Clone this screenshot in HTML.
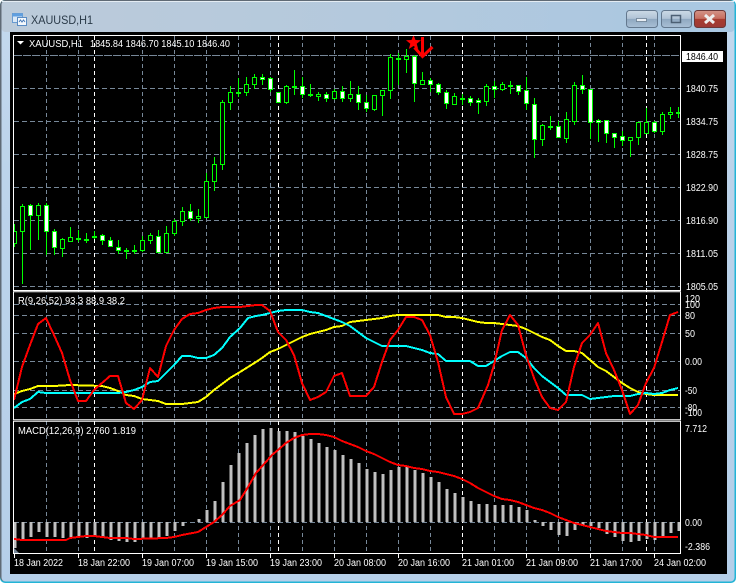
<!DOCTYPE html>
<html><head><meta charset="utf-8"><title>XAUUSD,H1</title>
<style>
html,body{margin:0;padding:0;background:#fff;width:738px;height:583px;overflow:hidden}
svg{display:block}
text{font-family:"Liberation Sans",sans-serif;font-size:10px;fill:#fff}
</style></head><body>
<svg width="738" height="583" viewBox="0 0 738 583" xmlns="http://www.w3.org/2000/svg">
<defs>
<linearGradient id="cap" x1="0" y1="0" x2="1" y2="0"><stop offset="0" stop-color="#bccbda"/><stop offset=".5" stop-color="#b4c9dd"/><stop offset="1" stop-color="#a9c8e2"/></linearGradient>
<linearGradient id="btn" x1="0" y1="0" x2="0" y2="1"><stop offset="0" stop-color="#ccdae6"/><stop offset=".48" stop-color="#b0c3d6"/><stop offset=".5" stop-color="#8fa8c0"/><stop offset="1" stop-color="#a9c0d6"/></linearGradient>
<linearGradient id="cls" x1="0" y1="0" x2="0" y2="1"><stop offset="0" stop-color="#d49488"/><stop offset=".48" stop-color="#c66e60"/><stop offset=".5" stop-color="#a83c30"/><stop offset="1" stop-color="#9c3a36"/></linearGradient>
<linearGradient id="side" x1="0" y1="0" x2="0" y2="1"><stop offset="0" stop-color="#c4d9ee"/><stop offset=".3" stop-color="#bcd3ea"/><stop offset="1" stop-color="#b5cfe9"/></linearGradient>
<clipPath id="m"><rect x="14" y="36" width="666" height="254"/></clipPath>
<clipPath id="r"><rect x="14" y="292" width="666" height="128"/></clipPath>
<clipPath id="d"><rect x="14" y="422" width="666" height="131"/></clipPath>
</defs>

<!-- window -->
<rect x="0" y="0" width="736" height="583" rx="5" fill="#23b4d6"/>
<rect x="0" y="0" width="734.500" height="581.500" rx="5" fill="#5f6a75"/>
<rect x="1.500" y="1" width="733" height="580.500" rx="4" fill="url(#side)"/>
<rect x="1.500" y="1" width="733" height="31" rx="4" fill="url(#cap)"/>
<rect x="2" y="1" width="732" height="1" fill="#e4ecf3"/>

<!-- title icon -->
<rect x="12.500" y="13.500" width="10" height="9" fill="#dbe9f7" stroke="#6a9bd0"/>
<rect x="12.500" y="13.500" width="10" height="3" fill="#5f9fe0"/>
<rect x="17.500" y="17.500" width="9" height="8" fill="#f4f8fc" stroke="#5a8cc4"/>
<path d="M19 22l1.500-2 1.500 2 1.500-2 1.500 2" fill="none" stroke="#4a7cb8"/>
<text x="31" y="24" textLength="62" lengthAdjust="spacingAndGlyphs" style="font-size:12px;fill:#2a3a48">XAUUSD,H1</text>

<!-- window buttons -->
<rect x="626.500" y="10.500" width="31" height="17" rx="3" fill="url(#btn)" stroke="#63788e"/>
<rect x="636.500" y="18.500" width="10" height="3" fill="#e8eef4" stroke="#5e7286" stroke-width=".7"/>
<rect x="661.500" y="10.500" width="30" height="17" rx="3" fill="url(#btn)" stroke="#63788e"/>
<rect x="671.500" y="15.500" width="9" height="7" fill="none" stroke="#4c6074" stroke-width="1.500"/>
<rect x="694.500" y="10.500" width="31" height="17" rx="3" fill="url(#cls)" stroke="#6b3838"/>
<path d="M705 15l9 8M714 15l-9 8" stroke="#eee" stroke-width="3" fill="none"/>

<!-- chart area -->
<rect x="10" y="32" width="717" height="542" fill="#000"/>

<!-- grid -->
<g fill="none" stroke="#778899" stroke-width="1" stroke-dasharray="5 3" shape-rendering="crispEdges">
<path d="M14 88.500H680M14 121.500H680M14 154.500H680M14 187.500H680M14 220.500H680M14 253.500H680M14 286.500H680"/>
<path d="M14 304.500H680M14 315.500H680M14 333.500H680M14 361.500H680M14 390.500H680M14 407.500H680M14 522.500H680"/>
<path d="M14 55.500H680" stroke-dasharray="8 1"/>
<path stroke-dasharray="4 3" d="M46.500 36V553M78.500 36V553M142.500 36V553M174.500 36V553M206.500 36V553M238.500 36V553M270.500 36V553M302.500 36V553M334.500 36V553M366.500 36V553M398.500 36V553M430.500 36V553M494.500 36V553M526.500 36V553M558.500 36V553M590.500 36V553M622.500 36V553M654.500 36V553"/>
<path stroke="#fff" stroke-dasharray="4 3" d="M94.500 36V553M278.500 36V553M462.500 36V553M646.500 36V553"/>
</g>

<!-- wicks -->
<g clip-path="url(#m)" shape-rendering="crispEdges">
<path fill="none" stroke="#0f0" stroke-width="1" d="M14.500 224V247M22.500 204V284M30.500 204V250M38.500 203V240M46.500 203V255M54.500 229V255M62.500 238V257M70.500 227V241M78.500 230V242M86.500 233V243M94.500 231V239M102.500 234V245M110.500 237V247M118.500 240V254M126.500 248V259M134.500 245V254M142.500 236V252M150.500 233V244M158.500 230V253M166.500 226V253M174.500 219V236M182.500 207V226M190.500 204V221M198.500 209V223M206.500 173V217M214.500 157V191M222.500 100V170M230.500 86V110M238.500 78V97M246.500 77V96M254.500 74V89M262.500 74V85M270.500 77V92M278.500 92V102M286.500 85V104M294.500 70V95M302.500 77V98M310.500 84V97M318.500 92V101M326.500 92V102M334.500 89V100M342.500 86V102M350.500 81V102M358.500 86V110M366.500 95V112M374.500 95V111M382.500 90V116M390.500 54V99M398.500 53V85M406.500 49V73M414.500 55V102M422.500 72V84M430.500 78V92M438.500 83V95M446.500 90V109M454.500 93V105M462.500 94V105M470.500 96V106M478.500 98V114M486.500 84V106M494.500 81V98M502.500 82V91M510.500 81V94M518.500 85V95M526.500 77V110M534.500 98V158M542.500 124V146M550.500 116V130M558.500 121V138M566.500 112V143M574.500 82V125M582.500 75V94M590.500 89V139M598.500 119V142M606.500 120V143M614.500 133V148M622.500 131V146M630.500 137V157M638.500 122V145M646.500 108V134M654.500 121V133M662.500 112V135M670.500 107V119M678.500 107V118"/>
<!-- hollow bodies -->
<path fill="#000" stroke="#0f0" stroke-width="1" d="M12.500 231.500h4v12h-4zM20.500 206.500h4v25h-4zM36.500 205.500h4v10h-4zM60.500 239.500h4v9h-4zM68.500 237.500h4v4h-4zM76.500 238.500h4v1h-4zM84.500 239.500h4v1h-4zM92.500 236.500h4v1h-4zM124.500 250.500h4v1h-4zM132.500 250.500h4v1h-4zM140.500 240.500h4v10h-4zM148.500 235.500h4v5h-4zM164.500 233.500h4v19h-4zM172.500 221.500h4v12h-4zM180.500 211.500h4v10h-4zM196.500 216.500h4v2h-4zM204.500 181.500h4v36h-4zM212.500 164.500h4v17h-4zM220.500 102.500h4v62h-4zM228.500 92.500h4v10h-4zM236.500 92.500h4v1h-4zM244.500 84.500h4v8h-4zM252.500 77.500h4v7h-4zM284.500 86.500h4v16h-4zM292.500 86.500h4v1h-4zM308.500 94.500h4v1h-4zM316.500 94.500h4v2h-4zM332.500 91.500h4v7h-4zM348.500 94.500h4v4h-4zM372.500 95.500h4v14h-4zM380.500 90.500h4v5h-4zM388.500 57.500h4v33h-4zM396.500 58.500h4v1h-4zM404.500 56.500h4v3h-4zM420.500 80.500h4v4h-4zM452.500 96.500h4v8h-4zM460.500 98.500h4v1h-4zM484.500 86.500h4v15h-4zM500.500 84.500h4v5h-4zM508.500 85.500h4v1h-4zM540.500 125.500h4v14h-4zM548.500 126.500h4v1h-4zM564.500 119.500h4v19h-4zM572.500 85.500h4v36h-4zM628.500 137.500h4v3h-4zM636.500 122.500h4v15h-4zM644.500 122.500h4v11h-4zM660.500 114.500h4v17h-4zM668.500 112.500h4v2h-4zM676.500 112.500h4v1h-4z"/>
<!-- filled bodies -->
<path fill="#fff" stroke="#0f0" stroke-width="1" d="M28.500 205.500h4v10h-4zM44.500 205.500h4v26h-4zM52.500 231.500h4v16h-4zM100.500 235.500h4v5h-4zM108.500 240.500h4v6h-4zM116.500 247.500h4v3h-4zM156.500 236.500h4v16h-4zM188.500 211.500h4v7h-4zM260.500 77.500h4v2h-4zM268.500 78.500h4v11h-4zM276.500 92.500h4v10h-4zM300.500 86.500h4v8h-4zM324.500 94.500h4v4h-4zM340.500 91.500h4v7h-4zM356.500 94.500h4v8h-4zM364.500 102.500h4v6h-4zM412.500 56.500h4v27h-4zM428.500 80.500h4v4h-4zM436.500 84.500h4v8h-4zM444.500 92.500h4v11h-4zM468.500 98.500h4v4h-4zM476.500 100.500h4v2h-4zM492.500 86.500h4v3h-4zM516.500 85.500h4v6h-4zM524.500 90.500h4v13h-4zM532.500 104.500h4v35h-4zM556.500 126.500h4v11h-4zM580.500 85.500h4v4h-4zM588.500 89.500h4v33h-4zM596.500 120.500h4v2h-4zM604.500 120.500h4v13h-4zM612.500 133.500h4v4h-4zM620.500 136.500h4v4h-4zM652.500 122.500h4v9h-4z"/>
</g>

<!-- star & arrow -->
<path fill="#f00" d="M413.500 35l2 5 5.500.3-4.300 3.400 1.500 5.300-4.700-3-4.700 3 1.500-5.300-4.300-3.400 5.500-.3z"/>
<path fill="none" stroke="#f00" stroke-width="3" d="M422.500 37V55M414.500 47.500l8 9 10-9.500"/>

<!-- RSI lines -->
<g clip-path="url(#r)" fill="none" stroke-width="2" stroke-linejoin="round" shape-rendering="crispEdges">
<polyline stroke="#ffff00" points="14,394 22,391 30,389 38,386 54,386 70,385 102,386 110,388 118,391 126,395 134,396 142,399 150,400 158,401 166,404 182,404 198,402 206,397 214,390 222,384 230,378 240,372 248,367 256,362 262,358 270,352 278,349 286,345 294,341 302,337 310,334 318,332 326,330 334,327 342,326 350,322 358,321 366,320 374,319 382,318 390,316 398,315 430,315 438,315 446,317 454,317 462,318 470,320 478,322 486,323 494,323 518,326 526,329 534,333 542,337 550,340 558,346 566,351 574,351 582,353 590,360 598,367 606,371 614,377 622,383 630,388 638,392 646,394 654,395 678,395"/>
<polyline stroke="#00ffff" points="14,408 22,402 30,399 38,392 46,393 118,393 126,392 134,390 142,387 150,382 158,381 166,373 174,365 182,356 190,356 198,358 206,358 214,355 222,348 230,337 240,328 248,318 256,316 262,315 270,313 278,311 286,310 294,310 302,310 310,312 318,313 326,316 334,319 342,322 350,326 358,332 366,338 374,342 382,346 406,346 414,348 422,350 430,353 438,354 446,361 470,361 478,366 486,366 494,361 502,356 510,352 518,352 526,358 534,368 542,376 550,382 558,388 566,395 582,395 590,399 598,398 606,397 614,396 630,396 638,394 646,393 654,394 662,393 670,390 678,388"/>
<polyline stroke="#ff0000" points="14,400 22,367 30,345 38,324 46,318 54,335 62,353 70,380 78,401 86,401 94,390 102,383 110,376 118,376 126,403 134,409 142,400 150,368 158,377 166,346 174,330 182,319 190,314 198,313 206,310 214,308 222,307 240,307 248,306 256,305 262,305 270,311 278,332 286,340 294,355 302,383 310,400 318,397 326,392 334,376 342,373 350,396 366,396 374,387 382,362 390,340 398,330 406,317 414,317 422,320 430,335 438,362 446,397 454,414 462,414 470,412 478,408 488,385 494,365 502,330 510,315 518,325 526,355 534,378 542,397 550,408 558,410 566,402 574,367 582,343 590,335 598,323 606,353 614,370 622,390 630,414 638,405 646,383 654,368 662,342 670,315 678,312"/>
</g>

<!-- MACD -->
<g clip-path="url(#d)" shape-rendering="crispEdges">
<path fill="none" stroke="#c0c0c0" stroke-width="3" d="M15 522V548M23 522V539M31 522V537M39 522V532M47 522V537M55 522V537M63 522V538M71 522V538M79 522V537M87 522V538M95 522V537M103 522V537M111 522V540M119 522V541M127 522V542M135 522V542M143 522V539M151 522V539M159 522V538M167 522V536M175 522V531M183 522V526M199 522V519M207 522V510M215 522V501M223 522V482M231 522V465M239 522V453M247 522V443M255 522V435M263 522V429M271 522V428M279 522V431M287 522V431M295 522V432M303 522V436M311 522V439M319 522V443M327 522V447M335 522V450M343 522V455M351 522V459M359 522V463M367 522V469M375 522V472M383 522V474M391 522V470M399 522V467M407 522V467M415 522V470M423 522V473M431 522V477M439 522V482M447 522V489M455 522V493M463 522V497M471 522V501M479 522V504M487 522V504M495 522V505M503 522V505M511 522V505M519 522V507M527 522V510M535 522V520M543 522V526M551 522V530M559 522V535M567 522V536M575 522V530M583 522V525M591 522V526M599 522V528M607 522V534M615 522V537M623 522V541M631 522V542M639 522V541M647 522V539M655 522V540M663 522V536M671 522V533M679 522V531"/>
</g>
<path d="M14 548l5 5h-5z" fill="#778899"/>
<polyline clip-path="url(#d)" fill="none" stroke="#ff0000" stroke-width="2" stroke-linejoin="round" shape-rendering="crispEdges" points="14,539 22,540 66,540 70,538 78,537 86,536 94,536 102,537 110,538 126,538 134,539 166,538 174,537 182,535 198,532 206,527 214,522 222,515 230,506 240,500 248,487 256,473 264,464 272,455 278,450 286,443 294,438 302,435 310,434 318,434 326,435 334,437 342,441 350,444 358,447 366,451 374,454 382,458 390,462 398,465 406,466 414,468 422,469 430,471 438,472 446,474 454,476 462,479 470,483 478,488 486,492 494,496 502,499 510,500 518,502 526,505 534,508 542,510 550,513 558,517 566,520 574,523 582,525 590,527 598,529 606,531 614,532 622,533 630,533 638,534 646,535 654,537 678,537"/>

<!-- panel borders -->
<g fill="none" stroke="#fff" stroke-width="1">
<path d="M13 35.500H680.500V290.300H13.500V35.500" shape-rendering="crispEdges"/>
<path d="M13.500 291.800H680.500V419.800H13.500Z"/>
<path d="M13.500 421.200H680.500V553.500H13.500Z"/>
<path d="M14.500 553V558M78.500 553V558M142.500 553V558M206.500 553V558M270.500 553V558M334.500 553V558M398.500 553V558M462.500 553V558M526.500 553V558M590.500 553V558M654.500 553V558" shape-rendering="crispEdges"/>
</g>

<!-- header labels -->
<path d="M17 41h7l-3.500 3.500z" fill="#fff"/>
<text x="29" y="47" textLength="54" lengthAdjust="spacingAndGlyphs">XAUUSD,H1</text>
<text x="90" y="47" textLength="140" lengthAdjust="spacingAndGlyphs">1845.84 1846.70 1845.10 1846.40</text>
<text x="18" y="304" textLength="107" lengthAdjust="spacingAndGlyphs">R(9,26,52) 93.3 88.9 38.2</text>
<text x="18" y="434" textLength="118" lengthAdjust="spacingAndGlyphs">MACD(12,26,9) 2.760 1.819</text>

<!-- price axis -->
<rect x="682" y="51" width="41" height="11" fill="#fff"/>
<text x="686" y="60" textLength="32" lengthAdjust="spacingAndGlyphs" style="fill:#000">1846.40</text>
<g>
<text x="686" y="92" textLength="32" lengthAdjust="spacingAndGlyphs">1840.75</text>
<text x="686" y="125" textLength="32" lengthAdjust="spacingAndGlyphs">1834.75</text>
<text x="686" y="158" textLength="32" lengthAdjust="spacingAndGlyphs">1828.75</text>
<text x="686" y="191" textLength="32" lengthAdjust="spacingAndGlyphs">1822.90</text>
<text x="686" y="224" textLength="32" lengthAdjust="spacingAndGlyphs">1816.90</text>
<text x="686" y="257" textLength="32" lengthAdjust="spacingAndGlyphs">1811.05</text>
<text x="686" y="290" textLength="32" lengthAdjust="spacingAndGlyphs">1805.05</text>
<text x="685" y="302" textLength="15" lengthAdjust="spacingAndGlyphs">120</text>
<text x="685" y="308" textLength="15" lengthAdjust="spacingAndGlyphs">100</text>
<text x="685" y="319" textLength="10" lengthAdjust="spacingAndGlyphs">80</text>
<text x="685" y="337" textLength="10" lengthAdjust="spacingAndGlyphs">50</text>
<text x="685" y="365" textLength="17" lengthAdjust="spacingAndGlyphs">0.00</text>
<text x="685" y="394" textLength="12" lengthAdjust="spacingAndGlyphs">-50</text>
<text x="685" y="411" textLength="12" lengthAdjust="spacingAndGlyphs">-80</text>
<text x="685" y="416" textLength="17" lengthAdjust="spacingAndGlyphs">-100</text>
<text x="685" y="432" textLength="22" lengthAdjust="spacingAndGlyphs">7.712</text>
<text x="685" y="526" textLength="17" lengthAdjust="spacingAndGlyphs">0.00</text>
<text x="685" y="550" textLength="25" lengthAdjust="spacingAndGlyphs">-2.386</text>
</g>

<!-- time axis -->
<g>
<text x="14" y="566" textLength="49" lengthAdjust="spacingAndGlyphs">18 Jan 2022</text>
<text x="78" y="566" textLength="52" lengthAdjust="spacingAndGlyphs">18 Jan 22:00</text>
<text x="142" y="566" textLength="52" lengthAdjust="spacingAndGlyphs">19 Jan 07:00</text>
<text x="206" y="566" textLength="52" lengthAdjust="spacingAndGlyphs">19 Jan 15:00</text>
<text x="270" y="566" textLength="52" lengthAdjust="spacingAndGlyphs">19 Jan 23:00</text>
<text x="334" y="566" textLength="52" lengthAdjust="spacingAndGlyphs">20 Jan 08:00</text>
<text x="398" y="566" textLength="52" lengthAdjust="spacingAndGlyphs">20 Jan 16:00</text>
<text x="462" y="566" textLength="52" lengthAdjust="spacingAndGlyphs">21 Jan 01:00</text>
<text x="526" y="566" textLength="52" lengthAdjust="spacingAndGlyphs">21 Jan 09:00</text>
<text x="590" y="566" textLength="52" lengthAdjust="spacingAndGlyphs">21 Jan 17:00</text>
<text x="654" y="566" textLength="52" lengthAdjust="spacingAndGlyphs">24 Jan 02:00</text>
</g>
</svg>
</body></html>
